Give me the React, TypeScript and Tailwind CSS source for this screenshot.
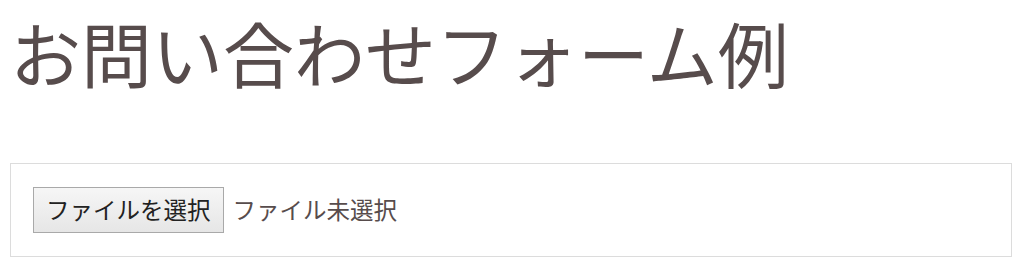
export default function App() {
  const font = { fontFamily: '"Noto Sans CJK JP", "Noto Sans", sans-serif' };
  return (
    <main className="min-h-[278px] bg-white px-[10px] pt-[16px]" style={font}>
      <h1 className="text-[71px] font-normal leading-[70px] text-[#574c4c]">お問い合わせフォーム例</h1>

      <div className="mt-[77px] w-[1002px] border border-[#dcdcdc] px-[22px] py-[23px]">
        <div className="flex items-center">
          <span className="flex h-[46px] items-center border border-[#a9a9a9] bg-gradient-to-b from-[#f6f6f6] to-[#e6e6e6] px-[12px] text-[23.5px] text-[#222]">
            ファイルを選択
          </span>
          <span className="ml-[9px] text-[23.5px] text-[#574c4c]">ファイル未選択</span>
        </div>
      </div>
    </main>
  );
}
